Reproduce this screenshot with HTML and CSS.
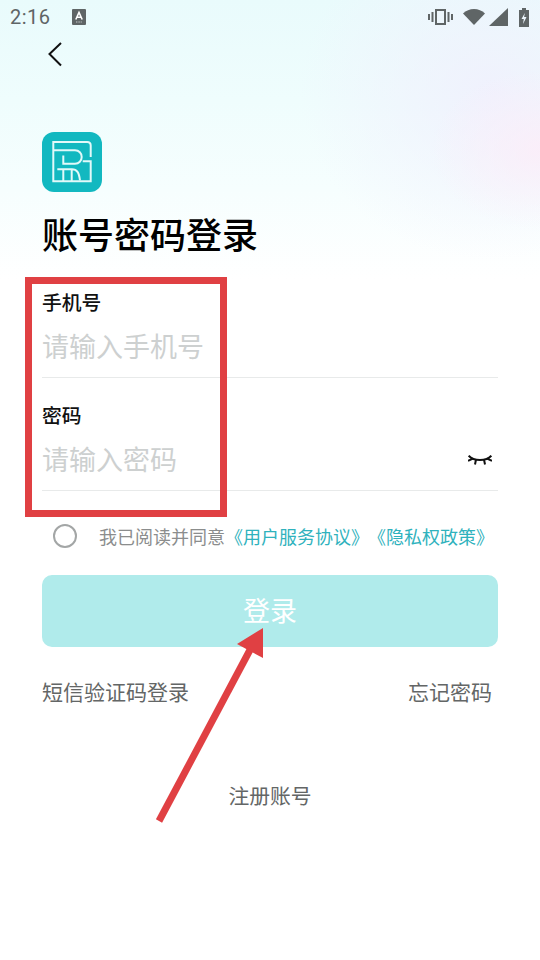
FILE: index.html
```html
<!DOCTYPE html>
<html lang="zh-CN">
<head>
    <meta charset="UTF-8">
    <meta name="viewport" content="width=device-width, initial-scale=1.0">
    <title>账号密码登录</title>
    <link rel="stylesheet" href="styles.css">
</head>
<body>
    <div class="screen">
        <div class="status-bar">
            <div class="status-left">
                <span class="time">2:16</span>
                <svg class="note-icon" width="14" height="16" viewBox="0 0 14 16">
                    <rect width="14" height="16" rx="1" fill="#5f6566"/>
                    <path d="M3.8 10.500 7 3.500l3.200 7M5 8.200h4" fill="none" stroke="#fff" stroke-width="1.600"/>
                    <path d="M4 13h6" stroke="#c8cccc" stroke-width="1" stroke-dasharray="1 .6"/>
                </svg>
            </div>
            <div class="status-right">
                <svg width="25" height="18" viewBox="0 0 25 18" fill="#5f6566">
                    <path d="M7 1h11v16H7zM9 3v12h7V3z" fill-rule="evenodd"/>
                    <rect x="3.500" y="4" width="2" height="10"/>
                    <rect x="0" y="6" width="2" height="6"/>
                    <rect x="19.500" y="4" width="2" height="10"/>
                    <rect x="23" y="6" width="2" height="6"/>
                </svg>
                <svg class="wifi" width="22" height="16" viewBox="0 0 22 16" fill="#5f6566">
                    <path d="M0 4.500C3 1.700 6.800 0 11 0s8 1.700 11 4.500L11 16z"/>
                </svg>
                <svg class="signal" width="19" height="18" viewBox="0 0 19 18" fill="#5f6566">
                    <path d="M19 0v18H0z"/>
                </svg>
                <svg class="battery" width="10" height="19" viewBox="0 0 10 19" fill="#5f6566">
                    <path d="M3 0h4v2h3v17H0V2h3zM5.800 5 2.500 11h2.300L4 16l3.500-7H5.100z" fill-rule="evenodd"/>
                </svg>
            </div>
        </div>

        <div class="back-row">
            <svg width="16" height="26" viewBox="0 0 16 26">
                <path d="M14 2 2.500 13 14 24.500" fill="none" stroke="#111" stroke-width="2"/>
            </svg>
        </div>

        <main class="content">
            <div class="logo">
                <svg width="60" height="60" viewBox="0 0 60 60" fill="none" stroke="#e2f9f9" stroke-width="2">
                    <path d="M48.700 25V13.500q0-3.500-3.500-3.500H11.300v39.300h37.400V29.300h-8"/>
                    <path d="M11.300 18.300H33c4 0 6.700 3 6.700 6.700s-2.700 6.700-6.700 6.700H21.300v-8.200"/>
                    <path d="M15.300 37.300H30c5 0 7 3 8 11M21.300 37.300v12M29.700 37.300v12"/>
                </svg>
            </div>
            <h1 class="title">账号密码登录</h1>

            <div class="field">
                <div class="field-label">手机号</div>
                <div class="field-input">
                    <span class="placeholder">请输入手机号</span>
                </div>
            </div>
            <div class="field field-second">
                <div class="field-label">密码</div>
                <div class="field-input">
                    <span class="placeholder">请输入密码</span>
                    <svg class="eye" width="24" height="10" viewBox="0 0 24 10" fill="none" stroke="#111" stroke-width="2">
                        <path d="M.7.7C3 3.300 6 5 12 5s9-1.700 11.300-4.300"/>
                        <path d="M0 5.800 5 3.600M24 5.800l-5-2.200M7 9.500l1-5M17 9.500l-1-5"/>
                    </svg>
                </div>
            </div>

            <div class="agree">
                <span class="radio"></span>
                <span class="agree-text">我已阅读并同意<a class="agree-link">《用户服务协议》</a><a class="agree-link second">《隐私权政策》</a></span>
            </div>

            <button type="button" class="login-btn">登录</button>

            <div class="link-row">
                <span>短信验证码登录</span>
                <span class="forgot">忘记密码</span>
            </div>
            <div class="register">注册账号</div>
        </main>

        <!-- red markup drawn on top of the screenshot -->
        <div class="mark-box"></div>
        <svg class="mark-arrow" width="540" height="960" viewBox="0 0 540 960">
            <path d="M159 821 251 648" fill="none" stroke="#e04043" stroke-width="7"/>
            <path d="M263 628 237 644 263 658z" fill="#e04043"/>
        </svg>
    </div>
</body>
</html>
```
FILE: styles.css
```css
* {
    box-sizing: border-box;
}
html, body {
    margin: 0;
    padding: 0;
}
body {
    font-family: "Noto Sans CJK SC", "Noto Sans", sans-serif;
    background-color: #fff;
}
.screen {
    position: relative;
    width: 540px;
    height: 960px;
    overflow: hidden;
    background:
        radial-gradient(ellipse 110px 80px at 540px 150px, rgba(252, 236, 248, .8), rgba(252, 236, 248, 0)),
        radial-gradient(ellipse 190px 170px at 490px 90px, rgba(240, 240, 253, .9), rgba(240, 240, 253, 0)),
        linear-gradient(180deg, #e9fbfc 0, #effdfd 100px, #f6fefe 190px, #fff 280px);
}
.status-bar {
    display: flex;
    justify-content: space-between;
    align-items: center;
    height: 36px;
    padding: 0 10px 2px;
}
.status-left {
    display: flex;
    align-items: center;
    gap: 21px;
}
.time {
    font-family: Roboto, sans-serif;
    font-size: 20px;
    letter-spacing: .5px;
    color: #5f6566;
}
.status-right {
    display: flex;
    align-items: center;
    gap: 10px;
    padding-right: 1px;
}
.status-right .signal {
    margin-left: -6px;
}
.status-right .battery {
    margin-left: 1px;
}
.back-row {
    height: 96px;
    padding: 5px 0 0 47px;
}
.content {
    padding: 0 42px;
}
.logo {
    width: 60px;
    height: 60px;
    border-radius: 12px;
    background-color: #12b8c0;
}
.logo svg {
    display: block;
}
.title {
    margin: 19px 0 0;
    font-size: 36px;
    line-height: 44px;
    font-weight: 500;
    color: #000;
}
.field {
    margin-top: 33px;
    border-bottom: 1px solid #e8eaea;
}
.field-second {
    margin-top: 23px;
}
.field-label {
    margin-bottom: 1px;
    font-size: 19.800px;
    line-height: 28px;
    font-weight: 500;
    color: #111;
}
.field-input {
    display: flex;
    justify-content: space-between;
    align-items: center;
    height: 60px;
    padding-right: 6px;
}
.placeholder {
    margin-bottom: 4px;
    font-size: 27px;
    color: #cdd0d0;
}
.agree {
    display: flex;
    align-items: center;
    height: 26px;
    margin-top: 32px;
    padding-left: 11px;
}
.radio {
    width: 24px;
    height: 24px;
    margin-right: 22px;
    border: 2px solid #a3a6a6;
    border-radius: 50%;
}
.agree-text {
    font-size: 18px;
    line-height: 26px;
    white-space: nowrap;
    color: #8b8d8d;
}
.agree-link {
    color: #2fb2bd;
}
.agree-link.second {
    margin-left: 8px;
}
.login-btn {
    display: block;
    width: 100%;
    height: 72px;
    margin-top: 26px;
    padding: 0 0 4px;
    border: none;
    border-radius: 10px;
    background-color: #b0ebeb;
    font-family: inherit;
    font-size: 27px;
    color: #fff;
}
.link-row {
    display: flex;
    justify-content: space-between;
    margin-top: 29px;
    padding-right: 6px;
    font-size: 21px;
    line-height: 30px;
    color: #636666;
}
.register {
    margin-top: 74px;
    font-size: 20.800px;
    line-height: 30px;
    text-align: center;
    color: #636666;
}
.mark-box {
    position: absolute;
    left: 25px;
    top: 277px;
    width: 202px;
    height: 240px;
    border: 7px solid #e04043;
}
.mark-arrow {
    position: absolute;
    left: 0;
    top: 0;
}
```
